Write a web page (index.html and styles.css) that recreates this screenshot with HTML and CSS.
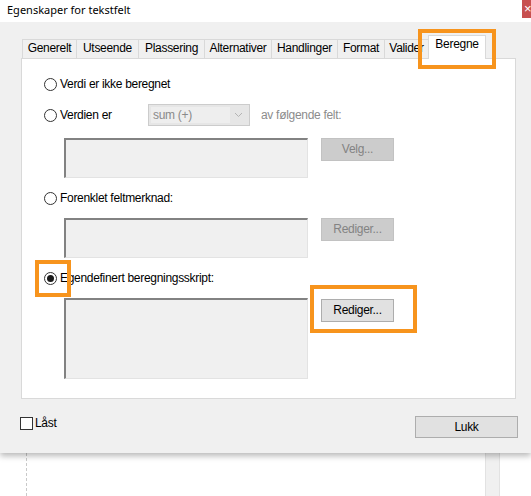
FILE: index.html
```html
<!DOCTYPE html>
<html lang="no">
<head>
<meta charset="utf-8">
<title>Egenskaper for tekstfelt</title>
<link rel="stylesheet" href="styles.css">
</head>
<body>
<div class="dialog">
  <div class="titlebar">
    <span class="title">Egenskaper for tekstfelt</span>
    <span class="close"><span class="close-x">×</span></span>
  </div>
  <div class="body">
    <div class="tabs">
      <div class="tab w1">Generelt</div>
      <div class="tab w2">Utseende</div>
      <div class="tab w3">Plassering</div>
      <div class="tab w4">Alternativer</div>
      <div class="tab w5">Handlinger</div>
      <div class="tab w6">Format</div>
      <div class="tab w7">Valider</div>
      <div class="tab active">Beregne</div>
    </div>
    <div class="panel">
      <div class="row r1">
        <span class="radio"></span><span class="label">Verdi er ikke beregnet</span>
      </div>
      <div class="row r2">
        <span class="radio"></span><span class="label fixed">Verdien er</span>
        <div class="select">
          <span class="select-text">sum (+)</span>
          <span class="select-arrow">
            <svg width="9" height="6" viewBox="0 0 9 6"><path d="M1 1 L4.5 4.5 L8 1" fill="none" stroke="#b4b4b4" stroke-width="1"/></svg>
          </span>
        </div>
        <span class="muted">av følgende felt:</span>
      </div>
      <div class="block b1">
        <div class="textbox"></div>
        <div class="btn disabled">Velg...</div>
      </div>
      <div class="row r3">
        <span class="radio"></span><span class="label">Forenklet feltmerknad:</span>
      </div>
      <div class="block b2">
        <div class="textbox"></div>
        <div class="btn disabled">Rediger...</div>
      </div>
      <div class="row r4">
        <span class="radio checked"></span><span class="label">Egendefinert beregningsskript:</span>
      </div>
      <div class="block b3">
        <div class="textbox tall"></div>
        <div class="btn">Rediger...</div>
      </div>
    </div>
    <div class="footer">
      <label class="check"><span class="box"></span><span>Låst</span></label>
      <div class="btn lukk">Lukk</div>
    </div>
  </div>
</div>
<div class="below">
  <div class="dashed"></div>
  <div class="bar"></div>
</div>

<div class="hl hl-tab"></div>
<div class="hl hl-radio"></div>
<div class="hl hl-btn"></div>
</body>
</html>
```

FILE: styles.css
```css
* { box-sizing: border-box; }
html, body { margin: 0; padding: 0; }
body {
  width: 531px;
  height: 496px;
  overflow: hidden;
  background: #ffffff;
  font-family: "Liberation Sans", Arial, sans-serif;
  font-size: 12px;
  letter-spacing: -0.3px;
  color: #000;
  position: relative;
}

.dialog {
  width: 531px;
  height: 453px;
  background: #f0f0f0;
  box-shadow: 0 3px 6px rgba(0,0,0,0.28);
  position: relative;
  z-index: 1;
}

.titlebar {
  height: 22px;
  background: #ffffff;
  display: flex;
  justify-content: space-between;
  align-items: flex-start;
}
.title {
  font-family: "Noto Sans", "Open Sans", sans-serif;
  font-size: 11px;
  letter-spacing: 0;
  line-height: 14px;
  padding: 3px 0 0 7px;
  color: #000;
}
.close {
  width: 9px;
  height: 18px;
  background: #c75050;
  overflow: hidden;
  display: block;
}
.close-x {
  display: block;
  color: #fff;
  font-size: 13px;
  line-height: 18px;
  padding-left: 2px;
}

.body {
  padding: 13px 0 0 21px;
}

.tabs {
  display: flex;
  align-items: flex-end;
  height: 23px;
  padding-left: 1px;
  position: relative;
  z-index: 2;
}
.tab {
  height: 19px;
  border: 1px solid #d9d9d9;
  border-right: none;
  border-bottom: none;
  background: #f0f0f0;
  text-align: center;
  line-height: 17px;
  white-space: nowrap;
}
.w1 { width: 54px; }
.w2 { width: 62px; }
.w3 { width: 66px; }
.w4 { width: 67px; }
.w5 { width: 66px; }
.w6 { width: 47px; }
.w7 { width: 44px; }
.tab.active {
  width: 58px;
  height: 24px;
  background: #ffffff;
  border: 1px solid #d9d9d9;
  border-bottom: none;
  line-height: 17px;
  margin-bottom: -1px;
}

.panel {
  width: 495px;
  height: 341px;
  background: #ffffff;
  border: 1px solid #d9d9d9;
  padding: 15px 0 0 22px;
}

.row {
  display: flex;
  align-items: center;
  height: 20px;
}
.r2 { height: 22px; margin-top: 10px; }
.r3 { margin-top: 10px; }
.r4 { margin-top: 10px; }

.radio {
  width: 13px;
  height: 13px;
  border: 1px solid #333333;
  border-radius: 50%;
  background: #fff;
  flex: none;
  position: relative;
}
.radio.checked::after {
  content: "";
  position: absolute;
  left: 2px;
  top: 2px;
  width: 7px;
  height: 7px;
  border-radius: 50%;
  background: #1a1a1a;
}
.label {
  margin-left: 3px;
  white-space: nowrap;
}
.label.fixed { width: 88px; }

.select {
  width: 102px;
  height: 22px;
  border: 1px solid #cccccc;
  background: #e6e6e6;
  display: flex;
  align-items: center;
  padding: 2px;
}
.select-text {
  flex: 1;
  height: 16px;
  background: #eeeeee;
  color: #8a8a8a;
  line-height: 16px;
  padding-left: 2px;
}
.select-arrow {
  width: 17px;
  display: flex;
  justify-content: center;
  align-items: center;
}
.muted {
  color: #8c8c8c;
  margin-left: 11px;
  white-space: nowrap;
}

.block {
  display: flex;
  align-items: flex-start;
  margin-left: 20px;
  margin-top: 10px;
}
.b1 { margin-top: 12px; }

.textbox {
  width: 244px;
  height: 40px;
  background: #f0f0f0;
  border-top: 2px solid #828282;
  border-left: 2px solid #828282;
  border-right: 1px solid #e3e3e3;
  border-bottom: 1px solid #e3e3e3;
}
.textbox.tall { height: 81px; }

.btn {
  width: 73px;
  height: 23px;
  margin-left: 13px;
  background: #e1e1e1;
  border: 1px solid #adadad;
  text-align: center;
  line-height: 21px;
  color: #000;
}
.b3 .btn { margin-top: 1px; }
.btn.disabled {
  background: #cccccc;
  border-color: #c2c2c2;
  color: #838383;
}

.footer {
  display: flex;
  justify-content: space-between;
  align-items: flex-start;
  margin-top: 17px;
  margin-left: -1px;
  width: 498px;
}
.check {
  display: flex;
  align-items: center;
  margin-top: 1px;
  line-height: 13px;
}
.box {
  width: 13px;
  height: 13px;
  border: 1px solid #333333;
  background: #ffffff;
  margin-right: 2px;
}
.btn.lukk {
  width: 103px;
  height: 22px;
  margin-left: 0;
  line-height: 20px;
}

.below {
  display: flex;
  height: 43px;
}
.dashed {
  margin-left: 26px;
  width: 0;
  border-left: 1px dashed #c9c9c9;
  height: 43px;
}
.bar {
  margin-left: 458px;
  width: 15px;
  height: 43px;
  background: #f0f0f0;
  border-left: 1px solid #e2e2e2;
  border-right: 1px solid #e2e2e2;
}

.hl {
  position: absolute;
  border: 4px solid #f7941d;
  z-index: 5;
}
.hl-tab { left: 418px; top: 29px; width: 78px; height: 40px; }
.hl-radio { left: 35px; top: 260px; width: 36px; height: 37px; }
.hl-btn { left: 310px; top: 285px; width: 107px; height: 48px; }
```
